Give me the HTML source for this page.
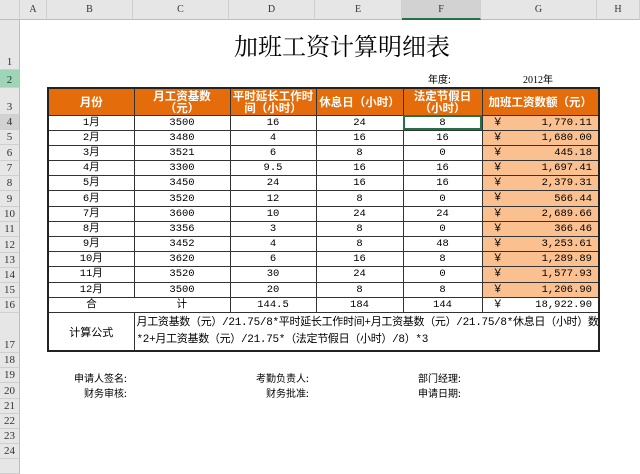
<!DOCTYPE html>
<html><head><meta charset="utf-8"><style>
*{margin:0;padding:0;box-sizing:border-box}
body{width:640px;height:465px;background:#fff;position:relative;overflow:hidden;font-family:"Liberation Sans","Noto Sans CJK SC",sans-serif;font-size:11px;color:#000}
.ch{position:absolute;top:0;height:20px;background:#e6e6e6;border-right:1px solid #cfcfcf;border-bottom:1px solid #bdbdbd;text-align:center;line-height:20px;font-family:"Liberation Serif","Noto Serif CJK SC",serif;font-size:10px;color:#333}
.rh{position:absolute;left:0;width:20px;background:#e6e6e6;border-bottom:1px solid #cfcfcf;border-right:1px solid #bdbdbd;font-family:"Liberation Serif",serif;font-size:11px;color:#333;text-align:center}
.rh span{position:absolute;bottom:0;left:0;right:0;line-height:14px}
table{position:absolute;left:47px;top:87px;width:551px;border-collapse:collapse;table-layout:fixed;border:2px solid #222}
td{border:1px solid #333;text-align:center;font-family:"Liberation Mono","Noto Sans CJK SC",monospace;font-size:10.5px;height:15.2px;line-height:12px;padding:0;white-space:nowrap;overflow:hidden}
tr{height:15.2px}
tr.h{height:27px}
tr.h td{background:#e46c0a;color:#fff;font-weight:bold;height:27px;font-family:"Noto Sans CJK SC",sans-serif;font-size:11.5px;line-height:12px}
td.g{background:#fac090;text-align:right;padding-right:6px;position:relative}
td.g2{text-align:right;padding-right:6px;position:relative}
td.g i,td.g2 i{position:absolute;left:10px;top:1px;font-style:normal}
.t{position:absolute;font-family:"Noto Sans CJK SC",sans-serif;font-size:10px}
</style></head><body>
<div class="ch" style="left:0;width:20px"></div>
<div class="ch" style="left:20px;width:27px">A</div>
<div class="ch" style="left:47px;width:86px">B</div>
<div class="ch" style="left:133px;width:96px">C</div>
<div class="ch" style="left:229px;width:86px">D</div>
<div class="ch" style="left:315px;width:87px">E</div>
<div class="ch" style="left:402px;width:79px;background:#d2d2d2;border-bottom:2px solid #217346">F</div>
<div class="ch" style="left:481px;width:116px">G</div>
<div class="ch" style="left:597px;width:43px">H</div>
<div class="rh" style="top:20px;height:50px"><span>1</span></div>
<div class="rh" style="top:70px;height:18px;background:#9fd5b7"><span>2</span></div>
<div class="rh" style="top:88px;height:27px"><span>3</span></div>
<div class="rh" style="top:115px;height:15px;background:#d2d2d2"><span>4</span></div>
<div class="rh" style="top:130px;height:15px"><span>5</span></div>
<div class="rh" style="top:145px;height:16px"><span>6</span></div>
<div class="rh" style="top:161px;height:15px"><span>7</span></div>
<div class="rh" style="top:176px;height:15px"><span>8</span></div>
<div class="rh" style="top:191px;height:16px"><span>9</span></div>
<div class="rh" style="top:207px;height:15px"><span>10</span></div>
<div class="rh" style="top:222px;height:15px"><span>11</span></div>
<div class="rh" style="top:237px;height:16px"><span>12</span></div>
<div class="rh" style="top:253px;height:15px"><span>13</span></div>
<div class="rh" style="top:268px;height:15px"><span>14</span></div>
<div class="rh" style="top:283px;height:15px"><span>15</span></div>
<div class="rh" style="top:298px;height:15px"><span>16</span></div>
<div class="rh" style="top:313px;height:40px"><span>17</span></div>
<div class="rh" style="top:353px;height:15px"><span>18</span></div>
<div class="rh" style="top:368px;height:15px"><span>19</span></div>
<div class="rh" style="top:383px;height:16px"><span>20</span></div>
<div class="rh" style="top:399px;height:15px"><span>21</span></div>
<div class="rh" style="top:414px;height:15px"><span>22</span></div>
<div class="rh" style="top:429px;height:15px"><span>23</span></div>
<div class="rh" style="top:444px;height:15px"><span>24</span></div>
<div class="rh" style="top:459px;height:15px"><span></span></div>

<div style="position:absolute;left:0;right:0;top:27px;text-align:center;font-family:'Noto Serif CJK SC',serif;font-size:24px;padding-left:44px">加班工资计算明细表</div>
<div class="t" style="left:428px;top:71px">年度:</div>
<div class="t" style="left:523px;top:71px;font-family:'Liberation Serif','Noto Sans CJK SC',serif">2012年</div>

<table>
<colgroup><col style="width:86px"><col style="width:96px"><col style="width:86px"><col style="width:87px"><col style="width:79px"><col style="width:117px"></colgroup>
<tr class="h"><td>月份</td><td>月工资基数<br>（元）</td><td>平时延长工作时<br>间（小时）</td><td>休息日（小时）</td><td>法定节假日<br>（小时）</td><td>加班工资数额（元）</td></tr>
<tr><td>1月</td><td>3500</td><td>16</td><td>24</td><td style="outline:2px solid #217346;outline-offset:-2px">8</td><td class="g"><i>￥</i>1,770.11</td></tr>
<tr><td>2月</td><td>3480</td><td>4</td><td>16</td><td>16</td><td class="g"><i>￥</i>1,680.00</td></tr>
<tr><td>3月</td><td>3521</td><td>6</td><td>8</td><td>0</td><td class="g"><i>￥</i>445.18</td></tr>
<tr><td>4月</td><td>3300</td><td>9.5</td><td>16</td><td>16</td><td class="g"><i>￥</i>1,697.41</td></tr>
<tr><td>5月</td><td>3450</td><td>24</td><td>16</td><td>16</td><td class="g"><i>￥</i>2,379.31</td></tr>
<tr><td>6月</td><td>3520</td><td>12</td><td>8</td><td>0</td><td class="g"><i>￥</i>566.44</td></tr>
<tr><td>7月</td><td>3600</td><td>10</td><td>24</td><td>24</td><td class="g"><i>￥</i>2,689.66</td></tr>
<tr><td>8月</td><td>3356</td><td>3</td><td>8</td><td>0</td><td class="g"><i>￥</i>366.46</td></tr>
<tr><td>9月</td><td>3452</td><td>4</td><td>8</td><td>48</td><td class="g"><i>￥</i>3,253.61</td></tr>
<tr><td>10月</td><td>3620</td><td>6</td><td>16</td><td>8</td><td class="g"><i>￥</i>1,289.89</td></tr>
<tr><td>11月</td><td>3520</td><td>30</td><td>24</td><td>0</td><td class="g"><i>￥</i>1,577.93</td></tr>
<tr><td>12月</td><td>3500</td><td>20</td><td>8</td><td>8</td><td class="g"><i>￥</i>1,206.90</td></tr>
<tr><td style="border-right:none">合</td><td style="border-left:none">计</td><td>144.5</td><td>184</td><td>144</td><td class="g2"><i>￥</i>18,922.90</td></tr>
<tr style="height:39px"><td style="height:39px;font-family:'Noto Sans CJK SC',sans-serif;font-size:11px">计算公式</td><td colspan="5" style="text-align:left;line-height:17px;padding-left:2px;font-size:11px;letter-spacing:-0.3px">月工资基数（元）/21.75/8*平时延长工作时间+月工资基数（元）/21.75/8*休息日（小时）数<br>*2+月工资基数（元）/21.75*（法定节假日（小时）/8）*3</td></tr>
</table>

<div class="t" style="left:74px;top:370px">申请人签名:</div>
<div class="t" style="left:84px;top:385px">财务审核:</div>
<div class="t" style="left:256px;top:370px">考勤负责人:</div>
<div class="t" style="left:266px;top:385px">财务批准:</div>
<div class="t" style="left:418px;top:370px">部门经理:</div>
<div class="t" style="left:418px;top:385px">申请日期:</div>
</body></html>
